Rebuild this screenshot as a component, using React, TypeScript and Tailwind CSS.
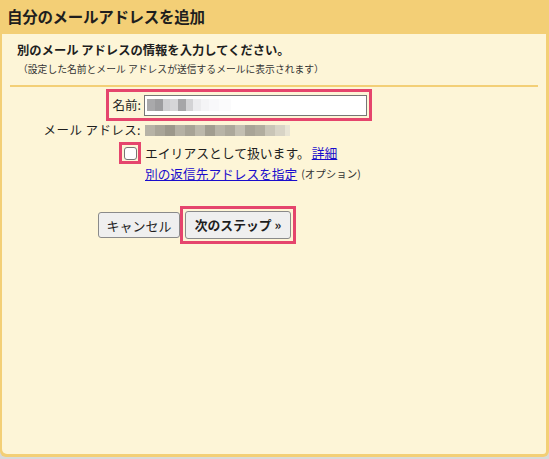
import React from "react";

const FONT = { fontFamily: '"Noto Sans CJK JP", "Noto Sans", sans-serif' };

function Blur({ cells, h }: { cells: [number, string][]; h: number }) {
  return (
    <div className="flex blur-[0.6px]">
      {cells.map(([w, c], i) => (
        <div key={i} style={{ width: w, height: h, background: c }} />
      ))}
    </div>
  );
}

export default function App() {
  return (
    <div className="w-[549px] h-[459px] bg-[#d9d9d9] text-[#1e1e1e]" style={FONT}>
      <div className="h-[457px] bg-[#f3cf76] rounded-b-[6px] flex flex-col pl-[2px] pr-[3px] pb-[3px]">
        <div className="h-[34px] flex items-center pl-[5px] pb-[1px]">
          <h1 className="text-[15.5px] font-bold leading-none tracking-[-0.3px]">自分のメールアドレスを追加</h1>
        </div>
        <div className="flex-1 bg-[#fdf5d7] rounded-bl-[5px] rounded-br-[3px] flex flex-col">
          <div className="pl-[15px] pt-[8px]">
            <p className="text-[12.3px] font-bold leading-[16px]">別のメール アドレスの情報を入力してください。</p>
            <p className="mt-[4px] text-[9.8px] leading-[14px] pl-[1px] text-[#333]">（設定した名前とメール アドレスが送信するメールに表示されます）</p>
          </div>
          <div className="mt-[9px] ml-[8px] mr-[8px] h-[2px] bg-[#f3cf76]" />

          <div className="mt-[2px] ml-[104px] w-[266px] h-[32px] border-[3px] border-[#e5456d] flex items-center pl-[1px] gap-[3px]">
            <span className="w-[31px] text-[12.5px] leading-none text-right">名前:</span>
            <div className="w-[223px] h-[21px] bg-white border border-[#767676] flex items-center pl-[2px]">
              <Blur
                h={12}
                cells={[
                  [8, "#a9a9ab"],
                  [8, "#9d9d9f"],
                  [7, "#cfcfd1"],
                  [8, "#d6d6d8"],
                  [8, "#a6a6a8"],
                  [7, "#d3d3d5"],
                  [8, "#ececee"],
                  [8, "#f4f4f6"],
                  [10, "#f8f8fa"],
                  [12, "#fbfbfc"],
                ]}
              />
            </div>
          </div>

          <div className="h-[18px] flex items-center">
            <span className="w-[139px] text-right text-[12.5px] leading-none tracking-[0.4px]">メール アドレス:</span>
            <div className="ml-[4px]">
              <Blur
                h={11}
                cells={[
                  [10, "#b7b3a6"],
                  [10, "#a9a598"],
                  [10, "#9c988b"],
                  [10, "#b5b1a4"],
                  [10, "#a7a396"],
                  [10, "#bcb8ab"],
                  [10, "#a19d90"],
                  [10, "#b8b4a7"],
                  [10, "#aca89b"],
                  [10, "#c3bfb2"],
                  [10, "#a8a497"],
                  [10, "#b1ad9f"],
                  [10, "#c9c5b7"],
                  [10, "#d8d4c6"],
                  [5, "#e8e4d4"],
                ]}
              />
            </div>
          </div>

          <div className="mt-[3px] h-[22px] flex items-center">
            <div className="ml-[117px] w-[22px] h-[22px] border-[3px] border-[#e5456d] flex items-center justify-center">
              <div className="w-[13px] h-[13px] bg-white border border-[#767676] rounded-[3px]" />
            </div>
            <span className="ml-[4px] text-[12.8px] leading-none">エイリアスとして扱います。</span>
            <a className="ml-[2px] text-[12.8px] leading-none text-[#1a0dcc] underline">詳細</a>
          </div>

          <div className="mt-[2px] h-[17px] flex items-center pl-[143px]">
            <a className="text-[12.7px] leading-none text-[#1a0dcc] underline">別の返信先アドレスを指定</a>
            <span className="ml-[4px] text-[10.5px] leading-none text-[#333]">(オプション)</span>
          </div>

          <div className="mt-[23px] flex items-center pl-[96px]">
            <button className="w-[82px] h-[26px] bg-[#efefef] border border-[#8a8a8a] rounded-[3px] text-[13px] leading-none">
              キャンセル
            </button>
            <div className="w-[116px] h-[38px] border-[3px] border-[#e5456d] flex items-center justify-center">
              <button className="w-[106px] h-[28px] bg-[#efefef] border border-[#8a8a8a] rounded-[3px] text-[12.8px] font-bold leading-none">
                次のステップ »
              </button>
            </div>
          </div>
        </div>
      </div>
    </div>
  );
}
